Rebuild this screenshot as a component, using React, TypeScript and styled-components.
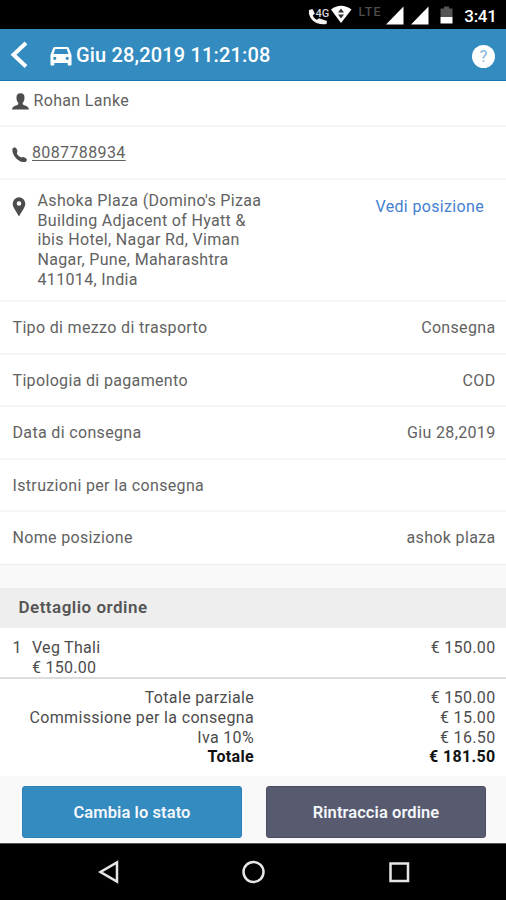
import React from "react";
import styled, { createGlobalStyle } from "styled-components";

const GlobalStyle = createGlobalStyle`
  * { box-sizing: border-box; }
  body { margin: 0; background: #f9f9f9; }
  button { font: inherit; }
`;

const Screen = styled.div`
  width: 506px;
  height: 900px;
  display: flex;
  flex-direction: column;
  overflow: hidden;
  background: #f9f9f9;
  color: #626262;
  font-family: Roboto, "Liberation Sans", sans-serif;
  font-size: 16px;
  line-height: 20px;
  letter-spacing: 0.34px;
`;

const StatusBar = styled.div`
  height: 29px;
  flex: none;
  background: #000;
  display: flex;
  justify-content: flex-end;
`;

const Header = styled.header`
  height: 52px;
  flex: none;
  display: flex;
  align-items: center;
  padding: 0 11px 0 10px;
  background: #338bbf;
  border-bottom: 1px solid #1577ad;
  color: #fff;
`;

const Title = styled.h1`
  flex: 1;
  margin: 0 0 0 4px;
  font-size: 20px;
  font-weight: 500;
  line-height: 24px;
  letter-spacing: 0.17px;
`;

const CarIcon = styled.svg`
  margin: 3px 0 0 21px;
`;

const Help = styled.button`
  width: 23px;
  height: 23px;
  margin-top: 4px;
  padding: 0;
  border: 0;
  border-radius: 50%;
  background: #fff;
  color: #7fb3dc;
  font-size: 16px;
  line-height: 23px;
  letter-spacing: 0;
`;

const Card = styled.section`
  flex: none;
  background: #fff;
`;

const Row = styled.div<{ $height: number; $top?: number }>`
  height: ${(p) => p.$height}px;
  display: flex;
  align-items: flex-start;
  padding: ${(p) => p.$top ?? 16}px 10.5px 0 12.5px;
  border-bottom: 2px solid #f6f6f6;

  &:last-child {
    border-bottom: 1px solid #ececec;
  }
`;

const Label = styled.span`
  flex: 1;
`;

const Value = styled.span``;

const IconSlot = styled.span<{ $width: number; $top: number }>`
  width: ${(p) => p.$width}px;
  flex: none;
  padding-top: ${(p) => p.$top}px;
  color: #4d4d4d;
  svg { display: block; margin-left: -0.5px; }
`;

const Phone = styled.a`
  color: inherit;
  text-decoration: underline;
  text-underline-offset: 2px;
  letter-spacing: 0.38px;
`;

const Address = styled.address`
  flex: 1;
  font-style: normal;
  line-height: 19.7px;
`;

const MapLink = styled.a`
  margin: 6px 11.5px 0 0;
  color: #4480d2;
`;

const SectionTitle = styled.h2`
  height: 40px;
  flex: none;
  margin: 23px 0 0;
  padding: 9px 18.5px 0;
  background: #eee;
  color: #555;
  font-size: 17px;
  font-weight: 600;
  line-height: 20px;
  letter-spacing: 0.48px;
`;

const Item = styled.div`
  height: 51px;
  display: grid;
  grid-template-columns: 19.5px 1fr auto;
  align-content: start;
  padding: 10px 10.5px 0 12.5px;
  border-bottom: 2px solid #ddd;
  color: #4c4c4c;
  line-height: 19.7px;
`;

const ItemName = styled.div`
  letter-spacing: 0.28px;
`;

const Totals = styled.div`
  height: 97px;
  padding: 9.2px 10.5px 0 0;
  color: #4c4c4c;
  line-height: 19.7px;
`;

const TotalLine = styled.div<{ $strong?: boolean }>`
  display: grid;
  grid-template-columns: 254px 1fr;
  text-align: right;
  font-weight: ${(p) => (p.$strong ? 700 : 400)};
  color: ${(p) => (p.$strong ? "#111" : "inherit")};
`;

const Actions = styled.div`
  flex: 1;
  display: grid;
  grid-template-columns: 220px 220px;
  gap: 24px;
  padding: 10px 20px 5px 22px;
`;

const Action = styled.button<{ $tone: string; $edge: string }>`
  border: 1px solid ${(p) => p.$edge};
  border-radius: 3px;
  padding: 1px 0 0;
  background: ${(p) => p.$tone};
  color: #f4f7fb;
  font-size: 16.5px;
  font-weight: 600;
  letter-spacing: 0.08px;
`;

const NavBar = styled.nav`
  height: 57px;
  flex: none;
  border-top: 1px solid #555;
  background: #000;
`;

const details = [
  { label: "Tipo di mezzo di trasporto", value: "Consegna", height: 53 },
  { label: "Tipologia di pagamento", value: "COD", height: 52 },
  { label: "Data di consegna", value: "Giu 28,2019", height: 53 },
  { label: "Istruzioni per la consegna", value: "", height: 52 },
  { label: "Nome posizione", value: "ashok plaza", height: 53 },
];

const totals = [
  { label: "Totale parziale", value: "€ 150.00" },
  { label: "Commissione per la consegna", value: "€ 15.00" },
  { label: "Iva 10%", value: "€ 16.50" },
  { label: "Totale", value: "€ 181.50", strong: true },
];

const StatusText = styled.text`
  font-family: Roboto, sans-serif;
  letter-spacing: 0;
`;

function StatusIcons() {
  return (
    <svg width="206" height="29" viewBox="300 0 206 29" fill="#fff">
      <path d="M309 10 312.500 9 314.800 13.500 312.800 15.400C313.500 17.200 314.800 18.600 317 19.700L319 18.200 324 20 327 21 326.500 24C317 26 307.500 19 309 10Z" fill="#f3f3f3" />
      <StatusText x="315.500" y="16.500" fontSize="11" fontWeight="500" fill="#d8d8d8">4G</StatusText>
      <path d="M331 9.500Q341 2 351.500 9.500L341 23Z" />
      <path d="m341 8.500 3 4h-6zM341 18.500l-3-4h6z" fill="#333" />
      <StatusText x="358.500" y="15.500" fontSize="12.500" fontWeight="500" fill="#4c4c4c" textLength="22">LTE</StatusText>
      <path d="M403.500 6.500V24.500H386zM428.500 6.500V24.500H411z" />
      <path d="M444 6.500h5v2h3.500V17h-12V8.500h3.500z" fill="#555" />
      <path d="M440.500 17h12v6.500h-12z" />
      <StatusText x="464.300" y="22" fontSize="17" fontWeight="500" textLength="32.500">3:41</StatusText>
    </svg>
  );
}

export default function App() {
  return (
    <Screen>
      <GlobalStyle />
      <StatusBar><StatusIcons /></StatusBar>
      <Header>
        <svg width="19" height="30" viewBox="0 0 19 30" fill="none" stroke="#fff" strokeWidth="4">
          <path d="M16 3 3.500 14.800 16 26.500" />
        </svg>
        <CarIcon width="22" height="19" viewBox="0 0 22 19" fill="#fff">
          <path fillRule="evenodd" d="M5 0h12c1 0 1.500.4 1.900 1.300L21.500 8v9.500q0 1-1 1h-1.800q-1 0-1-1V16H4.300v1.500q0 1-1 1H1.500q-1 0-1-1V8L3.100 1.300C3.500.4 4 0 5 0ZM5.300 2 3.500 7h15L16.700 2ZM4.800 9.700a1.600 1.600 0 1 0 0 3.200 1.600 1.600 0 0 0 0-3.200Zm12.400 0a1.600 1.600 0 1 0 0 3.200 1.600 1.600 0 0 0 0-3.200Z" />
        </CarIcon>
        <Title>Giu 28,2019 11:21:08</Title>
        <Help aria-label="Aiuto">?</Help>
      </Header>
      <Card>
        <Row $height={46} $top={9.5}>
          <IconSlot $width={21} $top={2.5}>
            <svg width="17" height="17" viewBox="0 0 17 17" fill="currentColor">
              <path d="M8.500.3c3 0 4.100 1.800 4 4.400 0 2.600-.8 4-1.800 5v1.500c1.500 1.500 5.800 1.500 6.300 5.300H0c.5-3.800 4.800-3.800 6.300-5.300V9.700c-1-1-1.800-2.400-1.800-5C4.400 2.100 5.500.3 8.500.3Z" />
            </svg>
          </IconSlot>
          <Label>Rohan Lanke</Label>
        </Row>
        <Row $height={53} $top={16}>
          <IconSlot $width={19.5} $top={4}>
            <svg width="16" height="16" viewBox="0 0 16 16" fill="currentColor">
              <path d="M.5 1.500 2.800.2C4.500 1 5.400 2.700 5.400 4.500L4.800 6.500C5.800 8.200 7.200 9.500 9.300 10.600L11.200 10C13 10.400 14.500 11.300 15 13L13.600 15C7.500 16.200-.7 8.500.5 1.500Z" />
            </svg>
          </IconSlot>
          <Phone>8087788934</Phone>
        </Row>
        <Row $height={122} $top={11}>
          <IconSlot $width={25} $top={6}>
            <svg width="14" height="20" viewBox="0 0 14 20" fill="currentColor">
              <path fillRule="evenodd" d="M7 .3A6.300 6.300 0 0 0 .7 6.600C.7 10.300 3 12.500 7 19.500 11 12.500 13.300 10.300 13.300 6.600A6.300 6.300 0 0 0 7 .3ZM7 4.200a2.300 2.300 0 1 1 0 4.600 2.300 2.300 0 0 1 0-4.600Z" />
            </svg>
          </IconSlot>
          <Address>
            Ashoka Plaza (Domino's Pizaa<br />
            Building Adjacent of Hyatt &amp;<br />
            ibis Hotel, Nagar Rd, Viman<br />
            Nagar, Pune, Maharashtra<br />
            411014, India
          </Address>
          <MapLink>Vedi posizione</MapLink>
        </Row>
        {details.map((d) => (
          <Row key={d.label} $height={d.height}>
            <Label>{d.label}</Label>
            <Value>{d.value}</Value>
          </Row>
        ))}
      </Card>
      <SectionTitle>Dettaglio ordine</SectionTitle>
      <Card>
        <Item>
          <span>1</span>
          <ItemName>Veg Thali<br />€ 150.00</ItemName>
          <span>€ 150.00</span>
        </Item>
        <Totals>
          {totals.map((t) => (
            <TotalLine key={t.label} $strong={t.strong}>
              <span>{t.label}</span>
              <span>{t.value}</span>
            </TotalLine>
          ))}
        </Totals>
      </Card>
      <Actions>
        <Action $tone="#338bbf" $edge="#2881b7">Cambia lo stato</Action>
        <Action $tone="#585b6f" $edge="#4c4e67">Rintraccia ordine</Action>
      </Actions>
      <NavBar>
        <svg width="506" height="56" viewBox="0 844 506 56" fill="none" stroke="#e6e6e6" strokeWidth="2.500">
          <path d="M117 862.500V881.500L100.500 872Z" />
          <circle cx="253.500" cy="872" r="10" />
          <rect x="390.500" y="863.500" width="17.500" height="17.500" />
        </svg>
      </NavBar>
    </Screen>
  );
}
